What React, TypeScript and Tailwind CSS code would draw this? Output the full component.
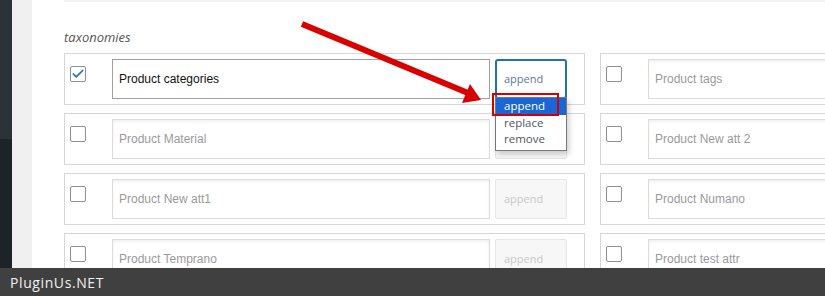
import { Check } from "lucide-react";

type Row = {
  label: string;
  checked?: boolean;
  active?: boolean;
};

const leftRows: Row[] = [
  { label: "Product categories", checked: true, active: true },
  { label: "Product Material" },
  { label: "Product New att1" },
  { label: "Product Temprano" },
];

const rightRows: Row[] = [
  { label: "Product tags" },
  { label: "Product New att 2" },
  { label: "Product Numano" },
  { label: "Product test attr" },
];

const Card = ({ row }: { row: Row }) => {
  return (
    <div className="relative h-[52px] w-[521px] shrink-0 border border-[#d6d6d6] bg-white">
      <div className="absolute left-[5px] top-[12px] flex h-[16px] w-[16px] items-center justify-center rounded-[2px] border border-[#8c8f94] bg-white">
        {row.checked && (
          <Check className="h-[14px] w-[14px] text-[#2271b1]" strokeWidth={3} />
        )}
      </div>
      <div className="absolute left-[47px] top-[5px] flex h-[40px] w-[378px] items-center">
        <div
          className={
            row.active
              ? "flex h-full w-full items-center border border-[#a0a0a0] bg-white px-[6px] text-[12px] text-[#111]"
              : "flex h-full w-full items-center border border-[#dcdcdc] bg-white px-[6px] text-[12px] text-[#9a9a9a] shadow-[inset_0_2px_3px_rgba(0,0,0,0.06)]"
          }
          style={{ fontFamily: "'Liberation Sans', Arial, sans-serif" }}
        >
          {row.label}
        </div>
      </div>
      <div
        className={
          row.active
            ? "absolute left-[430px] top-[5px] flex h-[40px] w-[72px] items-center rounded-[3px] border-2 border-[#2271b1] bg-white px-[7px] text-[11px] text-[#5b7a9a]"
            : "absolute left-[430px] top-[5px] flex h-[40px] w-[72px] items-center rounded-[2px] border border-[#e6e6e6] bg-[#f7f7f7] px-[8px] text-[11px] text-[#c8c8c8]"
        }
        style={{ fontFamily: "'Open Sans', 'Noto Sans', sans-serif" }}
      >
        append
      </div>
    </div>
  );
};

export default function App() {
  return (
    <div className="relative flex h-[296px] w-[825px] overflow-hidden bg-white">
      <div className="flex w-[12px] shrink-0 flex-col">
        <div className="h-[139px] bg-[#2c3338]" />
        <div className="flex-1 bg-[#1d2327]" />
      </div>
      <div className="w-[20px] shrink-0 bg-[#f0f0f1]" />
      <div className="flex flex-1 flex-col bg-white pl-[32px]">
        <div className="h-[2px] bg-[#f3f3f3]" />
        <div
          className="mt-[26px] h-[20px] text-[13px] italic text-[#555]"
          style={{ fontFamily: "'Open Sans', 'Noto Sans', sans-serif" }}
        >
          taxonomies
        </div>
        <div className="mt-[5px] flex gap-[15px]">
          <div className="flex flex-col gap-[8px]">
            {leftRows.map((r) => (
              <Card key={r.label} row={r} />
            ))}
          </div>
          <div className="flex flex-col gap-[8px]">
            {rightRows.map((r) => (
              <Card key={r.label} row={r} />
            ))}
          </div>
        </div>
      </div>

      {/* open dropdown */}
      <div
        className="absolute left-[495px] top-[97px] flex w-[72px] flex-col border border-[#777] bg-white pb-[3px] text-[11.5px] leading-[16px] text-[#50575e] shadow-[2px_3px_6px_rgba(0,0,0,0.2)]"
        style={{ fontFamily: "'Open Sans', 'Noto Sans', sans-serif" }}
      >
        <div className="h-[17px] bg-[#1a66d4] pl-[8px] text-white">append</div>
        <div className="pl-[8px]">replace</div>
        <div className="pl-[8px]">remove</div>
      </div>

      {/* annotation */}
      <div className="absolute left-[492px] top-[93px] h-[23px] w-[67px] border-2 border-[#d40000]" />
      <svg
        className="absolute left-0 top-0"
        width="825"
        height="296"
        viewBox="0 0 825 296"
      >
        <line x1="302" y1="24" x2="468" y2="93" stroke="#d90000" strokeWidth="6" />
        <polygon points="481,100 462,103 470,84" fill="#d90000" />
      </svg>

      <div className="absolute bottom-0 left-0 flex h-[28px] w-full items-center bg-[#404040] pl-[10px]">
        <span
          className="text-[14px] tracking-[0.6px] text-[#f0f0f0]"
          style={{ fontFamily: "'Open Sans', 'Noto Sans', sans-serif" }}
        >
          PluginUs.NET
        </span>
      </div>
    </div>
  );
}
